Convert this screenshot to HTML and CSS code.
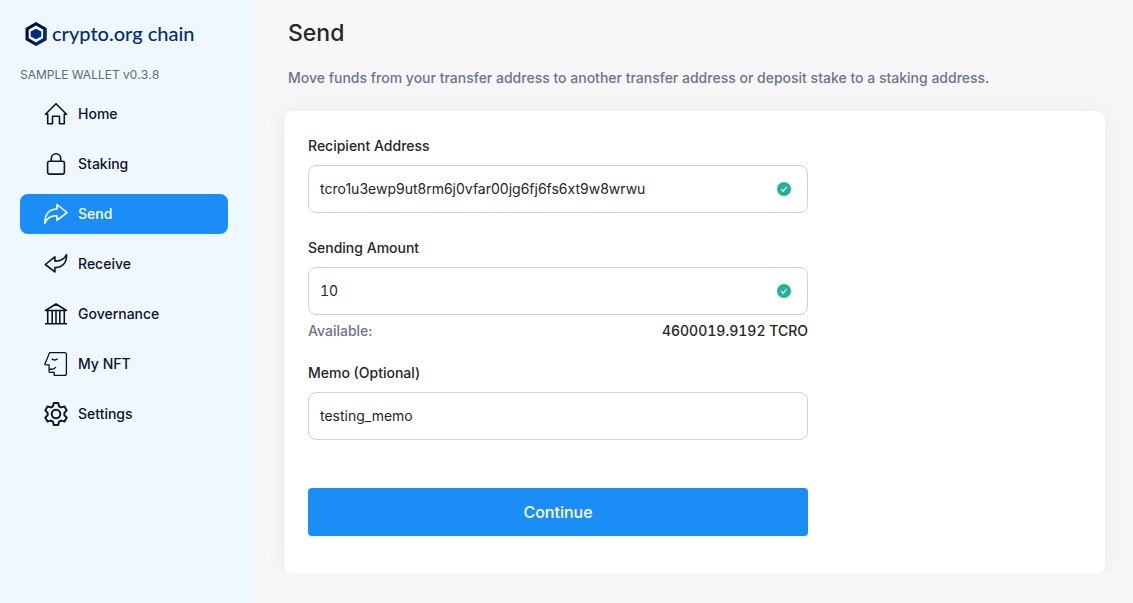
FILE: index.html
```html
<!DOCTYPE html>
<html lang="en">
<head>
<meta charset="utf-8">
<meta name="viewport" content="width=device-width, initial-scale=1">
<title>Send - Sample Wallet</title>
<link rel="stylesheet" href="styles.css">
</head>
<body>
<div class="layout">
  <aside class="sidebar">
    <div class="brand">
      <svg class="brand-mark" viewBox="0 0 22 24" aria-hidden="true">
        <path fill="#03123f" fill-rule="evenodd" d="M11 0 21.500 6v12L11 24 .5 18V6zM11 3.500 3.700 7.700v8.600L11 20.500l7.300-4.200V7.700z"/>
        <path fill="#002d74" d="M21.500 6v12L11 24v-3.500l7.300-4.200V7.700z"/>
        <path fill="#002d74" d="m11 6.700 5.300 2.800v5L11 17.300l-5.300-2.800v-5z"/>
      </svg>
      <span class="brand-name">crypto.org chain</span>
    </div>
    <div class="version">SAMPLE WALLET v0.3.8</div>
    <nav class="menu">
      <a class="menu-item" href="#home">
        <svg class="icon" viewBox="0 0 24 24" aria-hidden="true"><path d="M1.500 12.200 12 1.700l10.500 10.500h-2.200v9.600h-4.800v-7.500h-7v7.500H3.700v-9.600z"/></svg>
        Home
      </a>
      <a class="menu-item" href="#staking">
        <svg class="icon" viewBox="0 0 24 24" aria-hidden="true"><rect x="3.600" y="9.200" width="16.800" height="12.900" rx="2"/><path d="M7.300 9V6.500a4.700 4.700 0 0 1 9.400 0V9"/></svg>
        Staking
      </a>
      <a class="menu-item active" href="#send" aria-current="page">
        <svg class="icon" viewBox="0 0 24 24" aria-hidden="true"><path d="M13 2.500 23 10.500l-10 7.900v-4.700C7 13.400 3 15.500.8 21.400.3 13 4.500 7.300 13 7z"/></svg>
        Send
      </a>
      <a class="menu-item" href="#receive">
        <svg class="icon" viewBox="0 0 24 24" aria-hidden="true"><path d="M10.900 4.800 1.300 12.500l9.600 7.400v-4.300C18 15.800 23 11 22.500 2.500c-1.900 4.400-5.600 6.700-11.600 6.600z"/></svg>
        Receive
      </a>
      <a class="menu-item" href="#governance">
        <svg class="icon" viewBox="0 0 24 24" aria-hidden="true"><path d="M1.500 8.500h21L12 2zM1 21.700h22M3.700 8.500v13M8.200 8.500v13M12 8.500v13M15.800 8.500v13M20.300 8.500v13"/></svg>
        Governance
      </a>
      <a class="menu-item" href="#nft">
        <svg class="icon icon-thin" viewBox="0 0 24 24" aria-hidden="true"><path d="M5.600.7h15.200q1.600 0 1.600 1.600v19.800q0 1.400-1.500 1.400H10.200v-3.100H6q-.9 0-.9-1v-6.600H1.800q-1.100 0-.8-1zM7.600 6.700q3 2.600 6 0M5.600 17.100q4.500.7 6.300-2.100"/></svg>
        My NFT
      </a>
      <a class="menu-item" href="#settings">
        <svg class="icon icon-bold" viewBox="0 0 24 24" aria-hidden="true"><circle cx="12" cy="12" r="4.300"/><path d="M9.800 1h4.400l.9 3.300 1.900 1.100 3.500-.9 2.200 3.900-2.300 2.400v2.400l2.300 2.400-2.200 3.900-3.500-.9-1.900 1.100-.9 3.300H9.800l-.9-3.300L7 18.600l-3.500.9-2.200-3.900 2.300-2.400v-2.400L1.300 8.400l2.200-3.900 3.500.9 1.900-1.100z"/></svg>
        Settings
      </a>
    </nav>
  </aside>
  <div class="page">
    <main class="content">
      <header class="page-header">
        <h1 class="title">Send</h1>
        <p class="description">Move funds from your transfer address to another transfer address or deposit stake to a staking address.</p>
      </header>
      <section class="card">
        <form class="form">
          <div class="field">
            <label class="label" for="recipient">Recipient Address</label>
            <div class="control">
              <input class="input" id="recipient" type="text" value="tcro1u3ewp9ut8rm6j0vfar00jg6fj6fs6xt9w8wrwu" spellcheck="false">
              <svg class="valid" viewBox="0 0 14 14" aria-hidden="true"><circle cx="7" cy="7" r="7"/><path d="m4.200 7 2 2.300 3.500-4.500"/></svg>
            </div>
          </div>
          <div class="field">
            <label class="label" for="amount">Sending Amount</label>
            <div class="control">
              <input class="input number" id="amount" type="text" inputmode="decimal" value="10">
              <svg class="valid" viewBox="0 0 14 14" aria-hidden="true"><circle cx="7" cy="7" r="7"/><path d="m4.200 7 2 2.300 3.500-4.500"/></svg>
            </div>
            <div class="available">
              <span class="available-label">Available:</span>
              <span class="number">4600019.9192 TCRO</span>
            </div>
          </div>
          <div class="field">
            <label class="label" for="memo">Memo (Optional)</label>
            <div class="control">
              <input class="input" id="memo" type="text" value="testing_memo" spellcheck="false">
            </div>
          </div>
          <button class="submit" type="button">Continue</button>
        </form>
      </section>
    </main>
    <footer class="footer"></footer>
  </div>
</div>
</body>
</html>
```

FILE: styles.css
```css
* {
  box-sizing: border-box;
}

body {
  margin: 0;
  font-family: Inter, "Liberation Sans", sans-serif;
  font-size: 14px;
  line-height: 22px;
  color: #262626;
  background: #f7f7f7;
}

.layout {
  display: flex;
  min-height: 100vh;
}

.sidebar {
  flex: 0 0 252px;
  padding: 20px 24px 20px 20px;
  background: #f0f8ff;
}

.brand {
  display: flex;
  align-items: center;
  gap: 5px;
  height: 28px;
  padding-left: 5px;
}

.brand-mark {
  width: 22px;
  height: 24px;
}

.brand-name {
  padding-bottom: 2px;
  font-family: Lato, sans-serif;
  font-size: 20px;
  font-weight: 500;
  color: #002d74;
}

.version {
  margin-top: 16px;
  font-size: 12px;
  font-variant-numeric: tabular-nums;
  color: #626973;
}

.menu {
  display: flex;
  flex-direction: column;
  gap: 10px;
  margin-top: 8px;
}

.menu-item {
  display: flex;
  align-items: center;
  gap: 10px;
  height: 40px;
  padding: 0 24px;
  border-radius: 8px;
  font-weight: 500;
  color: #0b142a;
  text-decoration: none;
}

.menu-item.active {
  background: #1b8df7;
  color: #fff;
}

.icon {
  width: 24px;
  height: 24px;
  fill: none;
  stroke: currentColor;
  stroke-width: 1.6;
  stroke-linejoin: round;
}

.icon-thin {
  stroke-width: 1.3;
}

.icon-bold {
  stroke-width: 2;
}

.page {
  display: flex;
  flex: 1;
  flex-direction: column;
  min-width: 0;
}

.content {
  display: flex;
  flex: 1;
  flex-direction: column;
  padding: 16px 28px 0 32px;
  overflow: hidden;
}

.page-header {
  padding: 0 4px;
}

.title {
  margin: 0;
  font-size: 23px;
  font-weight: 500;
  line-height: 34px;
}

.description {
  margin: 17px 0 22px;
  font-weight: 500;
  color: #6b748b;
}

.card {
  flex: 1;
  padding: 24px;
  border-radius: 8px;
  background: #fff;
  box-shadow: 0 0 20px rgba(0, 0, 0, 0.06);
}

.form {
  display: flex;
  flex-direction: column;
  gap: 24px;
  max-width: 500px;
}

.label {
  display: block;
  margin-bottom: 8px;
  font-weight: 500;
}

.control {
  display: flex;
  align-items: center;
  height: 48px;
  padding: 0 16px 0 11px;
  border: 1px solid #d2d2d2;
  border-radius: 8px;
}

.control:focus-within {
  border-color: #1b8df7;
}

.input {
  flex: 1;
  min-width: 0;
  padding: 0;
  border: 0;
  outline: 0;
  background: transparent;
  font: inherit;
  color: inherit;
}

.number {
  font-variant-numeric: tabular-nums;
}

.valid {
  width: 14px;
  height: 14px;
}

.valid circle {
  fill: #20b199;
}

.valid path {
  fill: none;
  stroke: #fff;
  stroke-width: 1.2;
}

.available {
  display: flex;
  justify-content: space-between;
  margin-top: 9px;
  font-weight: 500;
  line-height: 14px;
}

.available-label {
  color: #6b748b;
}

.submit {
  height: 48px;
  margin-top: 24px;
  border: 0;
  border-radius: 4px;
  background: #1b8df7;
  box-shadow: 0 2px 0 rgba(0, 0, 0, 0.04);
  color: #fff;
  font-family: inherit;
  font-size: 16px;
  font-weight: 500;
}

.footer {
  height: 30px;
}
```
